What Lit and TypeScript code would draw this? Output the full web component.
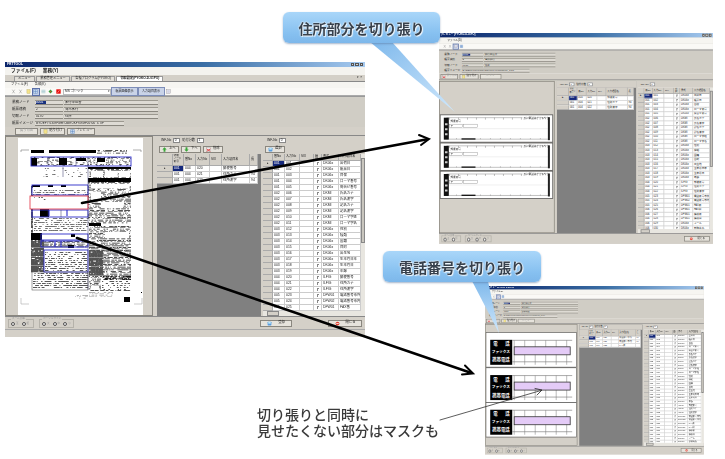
import { LitElement, html, css, svg } from "lit";
import { customElement } from "lit/decorators.js";

type Kind = "main" | "addr" | "phone";

const NAMES = ["出荷日","帳票日","目保","ローマ番号","問合せ番号","氏名カナ","氏名漢字","記名カナ","記名漢字","ローマ字姓","ローマ字名","性別","種類","国籍","目的","出生地","生年月日年","生年月日","年齢","郵便番号","住所カナ","住所漢字","電話番号市外","電話番号市内","FAX番","FAX局","携帯番","携帯局","メール","勤務先名"];
const TYPES = ["DK06x","DK06x","DK06x","DK06x","DK06x","DKMI","DKMI","DKMI","DKMI","DKMI","DKMI","DK06x","DK06x","DK06x","DK06x","DK06x","DK06x","DK06x","DK06x","ILFIG","ILFIG","ILFIG","DFW01","DFW02","DFW01","DFW01","DFW01","DFW01","DK06x","DK06x"];
const pad = (n: number) => String(n).padStart(3, "0");
const group = (i: number) => (i < 5 ? 1 : i < 11 ? 2 : i < 19 ? 3 : i < 22 ? 4 : i < 25 ? 5 : 6);

let seed = 12345;
const rnd = () => ((seed = (seed * 16807) % 2147483647) / 2147483647);
function streaks(x: number, y: number, w: number, h: number, d: number, step = 1.4) {
  let s = "";
  for (let j = y; j < y + h; j += step) {
    let i = x;
    while (i < x + w) {
      const len = 0.5 + rnd() * 1.4;
      const l = Math.min(len, x + w - i);
      if (rnd() < d) s += `M${i.toFixed(1)} ${j.toFixed(1)}h${l.toFixed(1)}v.65h-${l.toFixed(1)}z`;
      i += l;
    }
  }
  return s;
}
const textLines = (x: number, y: number, w: number, h: number, d = 0.6) => streaks(x, y, w, h, d, 2);

const DOC_BLACK = [[30,150,13,3],[48,150,47,3],[30,158,6,8],[58,158,8,7],[75,158,10,3],[96,158,8,4],[87,167,43,2],[87,178,43,4],[31,185,8,2],[47,185,5,2],[60,185,5,2],[39,209,9,8],[88,223,12,3],[30,233,11,7],[70,234,4,3],[67,245,6,3],[123,297,6,5],[140,292,1,1]];
const DOC_WHITE = [[31,167,31,10],[63,167,24,10],[31,178,56,6],[31,188,56,7],[29,196,58,13],[49,209,38,8],[32,218,55,14],[41,234,46,6],[43,250,44,22],[31,272,56,18],[100,202,22,6],[90,286,8,4],[100,280,30,10],[104,232,24,6],[90,171,12,6],[104,171,12,6],[118,171,11,6],[90,184,38,4],[90,192,10,7]];
const DOC_BLUE = [[30,157,100,9],[31,185,56,10],[31,210,56,7],[40,234,47,6],[40,241,47,6],[43,250,44,22]];
const docPaths = (() => {
  let dark = "";
  dark += streaks(96, 150, 30, 3, 0.55) + streaks(87, 169, 43, 9, 0.55) + streaks(87, 182, 43, 41, 0.6);
  dark += streaks(88, 226, 42, 24, 0.65) + streaks(88, 250, 14, 26, 0.95, 0.9) + streaks(102, 250, 28, 30, 0.7);
  dark += streaks(88, 276, 42, 14, 0.55) + streaks(30, 240, 13, 32, 0.95, 0.9) + streaks(30, 157, 100, 9, 0.35);
  dark += streaks(43, 241, 44, 7, 0.7) + streaks(30, 186, 2, 46, 0.9, 0.9);
  const mid = textLines(32, 168, 55, 9, 0.12) + textLines(32, 190, 55, 5, 0.45) + textLines(33, 218, 54, 14, 0.55);
  return { dark, mid, late: textLines(44, 252, 42, 19, 0.45) + textLines(32, 273, 55, 16, 0.65) + textLines(101, 281, 28, 9, 0.45) + textLines(33, 197, 14, 3, 0.25) };
})();
const cells = streaks(74, 295, 13, 3, 0.55) + streaks(88, 292, 24, 5, 0.5);

const ICON = {
  up: svg`<path d="M4 .5 7.5 4H5.5v3.500h-3V4H.5z" fill="#3aa83a"/>`,
  down: svg`<path d="M4 7.500 7.5 4H5.500V.5h-3V4H.5z" fill="#3aa83a"/>`,
  del: svg`<rect x="1" y="1" width="6" height="6" fill="#eee" stroke="#999" stroke-width=".5"/><path d="M1 7 7 3M1 3l6 4" stroke="#d22" stroke-width="1.2"/>`,
  blue: svg`<rect x="1" y="1" width="6" height="6" rx="1" fill="#5a9ee0"/><rect x="2" y="2" width="4" height="2" fill="#dff"/>`,
  stop: svg`<circle cx="4" cy="4" r="3" fill="#e23c2c"/><rect x="2" y="3.400" width="4" height="1.200" fill="#fff"/>`,
  cut: svg`<path d="M2 1 6 7M6 1 2 7" stroke="#888" stroke-width=".7"/>`,
  note: svg`<rect x="1.500" y="1" width="5" height="6" fill="#f3e28a" stroke="#a89a45" stroke-width=".5"/>`,
  grid: svg`<path d="M1 1h6v6H1zM4 1v6M1 4h6" fill="#cfe0f4" stroke="#3d6fb0" stroke-width=".6"/>`,
  dots: svg`<path d="M1 2h6M1 4h6M1 6h6" stroke="#2d8a9a" stroke-width=".9" stroke-dasharray="1 .6"/>`,
  green: svg`<path d="M4 .8 7.200 4 4 7.200.8 4z" fill="#2fa03a"/><circle cx="4" cy="4" r="1" fill="#e33"/>`,
  red: svg`<rect x=".5" y=".5" width="7" height="7" fill="#e8100c"/><path d="M2.500 6 5.500 2" stroke="#fff" stroke-width=".7"/>`,
  page: svg`<rect x="1" y="1" width="6" height="6" fill="#eef" stroke="#777" stroke-width=".5"/><path d="M2 3h4M2 5h4" stroke="#777" stroke-width=".5"/>`,
};
const ico = (k: keyof typeof ICON) => html`<svg class="ico" viewBox="0 0 8 8">${ICON[k]}</svg>`;

function docSvg() {
  return html`<svg class="doc" viewBox="17 138 125 177">
    <rect x="17" y="138" width="125" height="177" fill="#fff"/>
    <path d="M20 152v-2h8M140 152v-2h-8" fill="none" stroke="#777" stroke-width=".6"/>
    <path d="M20 298v6h8M141 298v6h-8" fill="none" stroke="#aaa" stroke-width=".6"/>
    <path d=${docPaths.dark} fill="#1a1a1a"/>
    ${DOC_WHITE.map((r) => svg`<rect x=${r[0]} y=${r[1]} width=${r[2]} height=${r[3]} fill="#fff"/>`)}
    <path d=${docPaths.mid} fill="#444"/>
    <path d=${docPaths.late} fill="#222"/>
    ${DOC_BLACK.map((r) => svg`<rect x=${r[0]} y=${r[1]} width=${r[2]} height=${r[3]} fill="#000"/>`)}
    ${DOC_BLUE.map((r) => svg`<rect x=${r[0]} y=${r[1]} width=${r[2]} height=${r[3]} fill="none" stroke="#2b2bc8" stroke-width=".9"/>`)}
    <path d="M62 167v10M87 157v133M47 158v8M75 158v8M47 210v7M60 210v7" stroke="#336" stroke-width=".5"/>
    <path d="M54 241v6M60 241v6M48 210v6M66 210v6" stroke="#2b2bc8" stroke-width="1.100"/>
    <rect x="29" y="196" width="58" height="13" fill="none" stroke="#e03040" stroke-width=".8"/>
    <rect x="31" y="272" width="56" height="18" fill="none" stroke="#444" stroke-width=".5"/>
    <path d=${cells} fill="#999"/>
  </svg>`;
}

function addrStrip() {
  return html`<svg class="strip" viewBox="0 0 112 27">
    <path d="M6 2.500h76M9 2.500v2M18 2.500v2M27 2.500v2M36 2.500v2M45 2.500v2M54 2.500v2M63 2.500v2M72 2.500v2M81 2.500v2" stroke="#666" stroke-width=".4" fill="none"/>
    <text x="83" y="4" class="st">氏に電話はかかるやら</text>
    <text x="10" y="6.800" class="st">郵便番号</text>
    <rect x="3.300" y="2.500" width="5" height="22" fill="#111"/>
    <path d="M4.500 8h2.500v2H4.500zM4.500 13h2.500v2H4.500zM4.500 18h2.500v2H4.500z" fill="#ccc"/>
    <rect x="9" y="9" width="13" height="3.200" fill="#fff" stroke="#888" stroke-width=".4"/>
    <rect x="23" y="9" width="14" height="3.200" fill="#fff" stroke="#888" stroke-width=".4"/>
    <text x="10" y="11.600" class="st">〒</text>
    <path d="M8.500 13.500h100" stroke="#ccc" stroke-width=".3"/>
    <path d="M8.500 24h100M16 23v1M40 23v1M50 23v1M60 23v1M70 23v1M80 23v1M90 23v1M100 23v1" stroke="#666" stroke-width=".4"/>
    <rect x="21" y="23.200" width="14" height="1.200" fill="#000"/>
    <rect x="107.500" y="2" width="2" height="23" fill="#222"/>
  </svg>`;
}

function phoneStrip() {
  const xs = [28, 38.500, 49, 59.500, 70, 80.500];
  return html`<svg class="strip" viewBox="0 0 90 34">
    <rect x="4" y="7" width="22" height="25" fill="#000"/>
    <text x="7" y="12.500" class="pt">電</text><text x="19" y="12.500" class="pt">話</text>
    <text x="5.500" y="20.400" class="pf">ファックス</text>
    <text x="6" y="28.500" class="pt">携帯電話</text>
    <path d="M26 7.500h60M26 29h60" stroke="#555" stroke-width=".5"/>
    ${xs.map((x) => svg`<path d=${`M${x} 7.500V32`} stroke="#777" stroke-width=".5"/>`)}
    <rect x="28" y="14" width="56" height="8" fill="#e4cbf7" stroke="#333" stroke-width=".8"/>
  </svg>`;
}

@customElement("app-root")
export class AppRoot extends LitElement {
  static styles = css`
    :host { display: block; position: relative; width: 725px; height: 459px; background: #fff; overflow: hidden;
      font-family: "Liberation Sans", "Noto Sans CJK JP", sans-serif; }
    * { box-sizing: border-box; }
    .win { position: absolute; width: 360px; display: flex; flex-direction: column; background: #d4d0c8; transform-origin: 0 0;
      font-size: 3.700px; line-height: 1; color: #222; }
    .w-main { left: 5px; top: 62px; height: 275px; filter: blur(.45px); }
    .w-addr { left: 439px; top: 33px; height: 277px; transform: scale(.761); filter: blur(.6px); }
    .w-phone { left: 485px; top: 286px; height: 277px; transform: scale(.608); filter: blur(.7px); }

    .title { height: 6px; flex: none; display: flex; align-items: center; gap: 2px; padding: 0 2px; color: #fff; font-size: 3.400px; font-weight: 700;
      background: linear-gradient(90deg, #0a246a, #3a6ea5 55%, #a6caf0); }
    .w-main .title { height: 5px; }
    .ctrls { margin-left: auto; display: flex; gap: 1px; }
    .ctrls i { width: 3.500px; height: 3.500px; background: #d4d0c8; border: .3px solid #555; }
    .menu { display: flex; align-items: center; gap: 7px; padding-left: 6px; background: #f6f5f1; flex: none; height: 8px; }
    .w-main .menu.top { font-size: 4.700px; font-weight: 700; height: 8px; background: #f4f3ef; }
    .tabs { display: flex; align-items: flex-end; height: 7px; flex: none; padding-left: 9px; gap: 1.500px; background: #d4d0c8; font-size: 3.200px; border-bottom: .6px solid #888; }
    .tab { height: 5.500px; padding: 0 3px; display: flex; align-items: center; background: #e2dfd8; border: .4px solid #999; border-bottom: 0; }
    .tab.on { background: #fff; font-weight: 700; }
    .tabs .x { margin-left: auto; padding-right: 3px; align-self: center; }
    .menu.sub { height: 6px; font-size: 3.200px; background: #f6f5f1; }
    .w-addr .menu.sub, .w-phone .menu.sub { height: 8px; font-size: 3.500px; padding-left: 11px; }
    .tools { height: 8px; flex: none; display: flex; align-items: center; gap: 1.500px; padding-left: 5px; background: #faf9f6; border-bottom: .6px solid #aaa; }
    .w-addr .tools, .w-phone .tools { padding-left: 4px; }
    .ico { width: 5px; height: 5px; flex: none; }
    .tb { width: 6px; height: 6px; display: flex; align-items: center; justify-content: center; flex: none; }
    .tb.sel { background: #c4cfe6; outline: .5px solid #5a6fa8; }
    .dd { width: 48px; height: 6px; background: #fff; border: .3px solid #bbb; display: flex; align-items: center; padding-left: 1.500px; font-size: 3.200px; justify-content: space-between; }
    .tbtn { height: 6.500px; width: 25px; background: #c9d3e8; outline: .5px solid #7d8db8; display: flex; align-items: center; justify-content: center; font-size: 3px; white-space: nowrap; }

    .info { flex: none; height: 31px; padding: 2px 0 0 7px; display: grid; grid-template-columns: 22px 28px 94px 1fr; grid-auto-rows: 7px; align-items: center; column-gap: 1px; background: #d0cdc5; border-top: .5px solid #999; font-size: 3.500px; }
    .fld { height: 5px; display: flex; align-items: center; background: #dedbd4; border-bottom: .6px solid #8a877f; border-top: .4px solid #9c9990; padding-left: 1px; font-size: 3.300px; overflow: hidden; white-space: nowrap; }
    .fld b { font-weight: 400; background: #17307e; color: #fff; width: 10px; height: 100%; display: flex; align-items: center; }
    .fld.long { grid-column: 2 / span 2; width: 89px; font-size: 3px; }
    .blank { grid-column: 4; }
    .acts { flex: none; height: 9px; display: flex; align-items: center; gap: 2px; padding-left: 2px; background: #d4d0c8; border-bottom: .6px solid #888; font-size: 3.300px; }
    .w-main .acts { padding-left: 10px; gap: 2px; }
    .btn { height: 7px; display: flex; align-items: center; justify-content: center; gap: 1.500px; padding: 0 1px; background: #e6e3dc; border: .4px solid #8a877f; font-size: 3.300px; white-space: nowrap; flex: none; }
    .btn.w1 { width: 23px; color: #999; }
    .btn.w2 { width: 25px; }
    .btn.w3 { width: 28px; color: #555; }
    .btn.off { color: #aaa; }

    .panes { flex: 1; min-height: 0; display: grid; grid-template-columns: 148px 4px 104px 2px 1fr; background: #d4d0c8; }
    .w-addr .panes, .w-phone .panes { grid-template-columns: 152px 3px 104px 2px 1fr; margin-top: 1px; }
    .left { min-width: 0; overflow: hidden; display: flex; flex-direction: column; border: .5px solid #8a877f; background: #d4d0c8; }
    .w-main .left { padding: 1px 0 0 11.500px; }
    .w-addr .left { padding: 44px 0 0 1px; gap: 1.500px; }
    .w-phone .left { padding: 13px 0 0 1px; gap: 1.700px; }
    .doc { width: 125px; height: 177px; flex: none; display: block; filter: blur(.3px); }
    .strip { width: 147px; flex: none; display: block; background: #fff; outline: .6px solid #555; }
    .w-phone .strip { width: 148px; }
    .st { font-size: 2.600px; fill: #222; }
    .pt { font-size: 4.400px; font-weight: 700; fill: #fff; }
    .pf { font-size: 3.700px; font-weight: 700; fill: #fff; }

    .mid, .right { min-width: 0; display: flex; flex-direction: column; overflow: hidden; }
    .mid { background: #808080; }
    .ctl { background: #d4d0c8; flex: none; height: 9px; display: flex; align-items: center; gap: 2px; padding-left: 4px; font-size: 3.200px; }
    .box { width: 7px; height: 4.500px; background: #fff; border: .4px solid #888; display: inline-flex; align-items: center; padding-left: .5px; }
    .ctl2 { background: #d4d0c8; flex: none; height: 9px; display: flex; align-items: center; gap: 2px; padding-left: 2px; padding-bottom: 1px; }
    .ctl2 .btn { width: 20px; height: 7px; }
    .row { display: grid; height: 6px; align-items: center; background: #fff; }
    .mrow { grid-template-columns: 16px 11px 12px 14px 12px 28px 8px; width: 101px; }
    .rrow { grid-template-columns: 10px 12px 15px 14px 8px 17px 22px; }
    .w-addr .rrow, .w-phone .rrow { grid-template-columns: 9px 11px 15px 13px 8px 17px 22px; }
    .row > span { height: 100%; display: flex; align-items: center; padding-left: 1px; border-right: .3px solid #ccc; border-bottom: .3px solid #ccc; white-space: nowrap; overflow: hidden; font-size: 3.400px; }
    .row > span.rh { background: #d4d0c8; border-color: #aaa; justify-content: center; padding: 0; }
    .row > span.cur { background: #14287c; color: #fff; }
    .row.head { background: #d4d0c8; }
    .row.head > span { background: #d4d0c8; border-color: #aaa; font-size: 3.100px; line-height: 1.050; white-space: normal; }
    .row.head > span.tri { font-size: 2.700px; line-height: 1; padding-left: .5px; }
    .mrow.head { height: 12px; }
    .w-addr .mrow.head, .w-phone .mrow.head { height: 11px; }
    .rrow.head { height: 7px; }
    .w-addr .rrow.head, .w-phone .rrow.head { height: 8px; }
    .cb { width: 2.600px; height: 2.600px; background: #fff; border-left: .4px solid #888; border-top: .4px solid #888; margin-left: 1.500px; display: block; }
    .rbody { flex: 1; min-height: 0; display: flex; background: #fff; }
    .rcols { flex: 1; min-width: 0; overflow: hidden; }
    .vs { width: 4px; flex: none; background: #e8e6e0; display: flex; flex-direction: column; }
    .vs i { display: block; background: #c9c6be; height: 54%; margin-top: 4px; border: .3px solid #888; }
    .hs { height: 5px; flex: none; background: #e8e6e0; display: flex; align-items: center; }
    .hs i { display: block; background: #d4d0c8; width: 12px; height: 100%; border: .3px solid #888; margin-left: 4px; }

    .status { flex: none; height: 13px; display: flex; align-items: center; gap: 5px; padding-left: 3px; background: #d4d0c8; border-top: .5px solid #888; font-size: 3px; color: #999; }
    .w-addr .status, .w-phone .status { height: 14px; }
    .grp { height: 9px; border: .4px solid #b5b2aa; position: relative; display: flex; align-items: center; gap: 3px; padding: 2px 2px 0; flex: none; }
    .grp em { position: absolute; left: 2px; top: -1.500px; font-style: normal; background: #d4d0c8; padding: 0 1px; line-height: 1; font-size: 2.600px; white-space: nowrap; }
    .radio { display: inline-flex; align-items: center; gap: .8px; font-size: 2.600px; }
    .radio::before { content: ""; width: 2.200px; height: 2.200px; border-radius: 50%; background: #eee; border: .4px solid #555; flex: none; }
    .grp.g1 { width: 26px; }
    .grp.g2 { width: 35px; }
    .status .btn { color: #222; height: 7px; }
    .ok { width: 32px; margin-left: 181px; gap: 6px; }
    .close { width: 34px; margin-left: 31px; gap: 6px; }
    .w-addr .close, .w-phone .close { margin-left: auto; margin-right: 4px; }
    .foot { flex: none; height: 8px; background: #d4d0c8; border-top: .5px solid #aaa; }

    .art { position: absolute; inset: 0; width: 725px; height: 459px; pointer-events: none; }
    .bubble { position: absolute; height: 31px; border-radius: 6px; display: flex; align-items: center; justify-content: center;
      background: linear-gradient(#a9d6f9, #86c0f0 70%, #7db7ea); box-shadow: 0 1px 2px rgba(90,120,160,.55);
      font-family: "Noto Sans CJK JP", sans-serif; font-weight: 700; font-size: 14px; color: #37414d; filter: blur(.25px);
      text-shadow: 0 0 1px #fff, 0 0 2px #fff, 1px 1px 1px #eef7ff; }
    .b1 { left: 283px; top: 12px; width: 157px; }
    .b2 { left: 383px; top: 251px; width: 158px; }
    .note { position: absolute; left: 257px; top: 406px; font-family: "Noto Sans CJK JP", sans-serif; font-size: 14px; line-height: 16px; color: #3a3a3a; font-weight: 500; filter: blur(.25px); white-space: nowrap; }
  `;

  private rightGrid(kind: Kind) {
    const count = kind === "main" ? 25 : 30;
    const rows = NAMES.slice(0, count).map((n, i) => html`<div class="row rrow">
      <span class="rh">${i === 0 ? "▸" : ""}</span>
      <span class=${i === 0 ? "cur" : ""}>${pad(group(i))}</span>
      <span>${pad(i + 1)}</span><span></span>
      <span><i class="cb"></i></span>
      <span>${TYPES[i]}</span><span>${n}</span>
    </div>`);
    return html`<div class="rbody">
        <div class="rcols">
          <div class="row rrow head"><span></span><span>番No</span><span>入力No</span><span>SIX</span><span>選択</span><span>書式</span><span>入力項目名</span></div>
          ${rows}
        </div>
        <div class="vs"><i></i></div>
      </div>
      <div class="hs"><i></i></div>`;
  }

  private midGrid(kind: Kind) {
    const data = kind === "phone"
      ? [["電話番号市外", "94"], ["電話番号市内", "94"], ["FAX番", ""]]
      : [["郵便番号", ""], ["住所カナ", "94"], ["住所漢字", "94"]];
    return html`<div class="row mrow head"><span></span><span class="tri">切取<br />ノード<br />番号</span><span>番No</span><span>入力No</span><span>SIX</span><span>入力項目名</span><span>長</span></div>
      ${data.map((d, i) => html`<div class="row mrow">
        <span class="rh">${i === 0 ? "▸" : ""}</span>
        <span class=${i === 0 ? "cur" : ""}>001</span><span>004</span><span>${pad(i === 0 ? 20 : 20 + i)}</span><span></span><span>${d[0]}</span><span>${d[1]}</span>
      </div>`)}`;
  }

  private win(kind: Kind) {
    const isMain = kind === "main";
    return html`<section class="win w-${kind}">
      <div class="title"><span>${isMain ? "FRTTOOL" : "プレビュー [PYOKO-D-01PO]"}</span><span class="ctrls"><i></i><i></i><i></i></span></div>
      ${isMain
        ? html`<div class="menu top"><span>ファイル(F)</span><span>業務(Y)</span></div>
            <div class="tabs"><span class="tab">メニュー</span><span class="tab">業務管理メニュー</span><span class="tab">各種プログラム(PYOKO)</span><span class="tab on">切取設定(PYOKO-D-01PO)</span><span class="x">▾ ×</span></div>
            <div class="menu sub"><span>ファイル(F)</span><span>各部(K)</span></div>`
        : html`<div class="menu sub"><span>ファイル(D)</span></div>`}
      <div class="tools">
        ${isMain
          ? html`<span class="tb">${ico("cut")}</span><span class="tb">${ico("cut")}</span><span class="tb">${ico("note")}</span><span class="tb sel">${ico("grid")}</span><span class="tb">${ico("dots")}</span><span class="tb">${ico("green")}</span><span class="tb">${ico("red")}</span>
              <span class="dd"><span>MS ゴシック</span><span>▾</span></span><span class="tbtn">帳票画像表示</span><span class="tbtn">入力項目表示</span><span class="tb">${ico("page")}</span>`
          : html`<span class="tb">${ico("cut")}</span><span class="tb">${ico("cut")}</span><span class="tb sel">${ico("page")}</span><span class="tb">${ico("grid")}</span>`}
      </div>
      <div class="info">
        <span>業務ノード</span><span class="fld"><b>0001</b></span><span class="fld">旅行申込書</span><span class="blank"></span>
        <span>帳票連続</span><span class="fld">2</span><span class="fld">海外旅行</span><span class="blank"></span>
        <span>切取ノード</span><span class="fld">0170</span><span class="fld">${kind === "phone" ? "勤務電話" : "住所"}</span><span class="blank"></span>
        <span>帳票イメージ</span><span class="fld long">B:¥DEFT¥List¥Form¥Job¥UKF¥0¥MF05¥00_3.TIF</span>
      </div>
      <div class="acts">
        ${isMain
          ? html`<span class="btn w1">戻り切出</span><span class="btn w2">${ico("note")}貼り付け</span><span class="btn w3">${ico("grid")}プレビュー</span>`
          : html`<span class="btn w1">${ico("del")}戻り切出</span><span class="btn w2">${ico("note")}貼り付け</span><span class="btn w3 off">プレビュー</span>`}
      </div>
      <div class="panes">
        <div class="left">${isMain ? docSvg() : [0, 1, 2].map(() => (kind === "addr" ? addrStrip() : phoneStrip()))}</div>
        <div></div>
        <div class="mid">
          <div class="ctl"><span>INF-No</span><span class="box">0</span><span>貼付分数</span><span class="box">1</span></div>
          ${isMain ? html`<div class="ctl2"><span class="btn">${ico("up")}上へ</span><span class="btn">${ico("down")}下へ</span><span class="btn">${ico("del")}削除</span></div>` : ""}
          ${this.midGrid(kind)}
        </div>
        <div></div>
        <div class="right">
          <div class="ctl"><span>INF-No</span><span class="box">0</span></div>
          ${isMain ? html`<div class="ctl2"><span class="btn">${ico("blue")}選択</span></div>` : ""}
          ${this.rightGrid(kind)}
        </div>
      </div>
      <div class="status">
        <div class="grp g1"><em>ズーム比率</em><span class="radio">全</span><span class="radio">幅</span></div>
        <div class="grp g2"><em>カーソルサイズ</em><span class="radio">大</span><span class="radio">中</span><span class="radio">小</span></div>
        ${isMain ? html`<span class="btn ok">${ico("blue")}登録</span>` : ""}
        <span class="btn close">${ico("stop")}閉じる</span>
      </div>
      ${isMain ? html`<div class="foot"></div>` : ""}
    </section>`;
  }

  render() {
    return html`
      ${this.win("main")}
      ${this.win("addr")}
      ${this.win("phone")}
      <svg class="art" viewBox="0 0 725 459">
        <defs>
          <linearGradient id="t1" x1="0" y1="0" x2="1" y2="1"><stop offset="0" stop-color="#7fb9ec"/><stop offset="1" stop-color="#cfe7fb"/></linearGradient>
          <linearGradient id="t2" x1="0" y1="0" x2="0" y2="1"><stop offset="0" stop-color="#7fb9ec"/><stop offset="1" stop-color="#cfe7fb"/></linearGradient>
          <filter id="sh" x="-5%" y="-20%" width="110%" height="140%"><feGaussianBlur stdDeviation=".45"/></filter>
        </defs>
        <polygon points="370,42 392,42 455,112" fill="url(#t1)"/>
        <polygon points="472,281 488,281 499,333" fill="url(#t2)"/>
        <g fill="none" stroke="#000" stroke-linecap="round" filter="url(#sh)">
          <path d="M82 203 426 139.500" stroke-width="2.600"/>
          <path d="M419 135 429 139 421 145" stroke-width="2" stroke-linejoin="miter"/>
          <path d="M77 238 470 372.500" stroke-width="2.600"/>
          <path d="M465 365.500 473 373.500 462 374.500" stroke-width="2" stroke-linejoin="miter"/>
          <path d="M440 420 541 390.500" stroke="#333" stroke-width=".8"/>
          <path d="M535 388.500 542 390 537 395" stroke="#222" stroke-width=".8"/>
        </g>
      </svg>
      <div class="bubble b1">住所部分を切り張り</div>
      <div class="bubble b2">電話番号を切り張り</div>
      <div class="note">切り張りと同時に<br />見せたくない部分はマスクも</div>
    `;
  }
}
